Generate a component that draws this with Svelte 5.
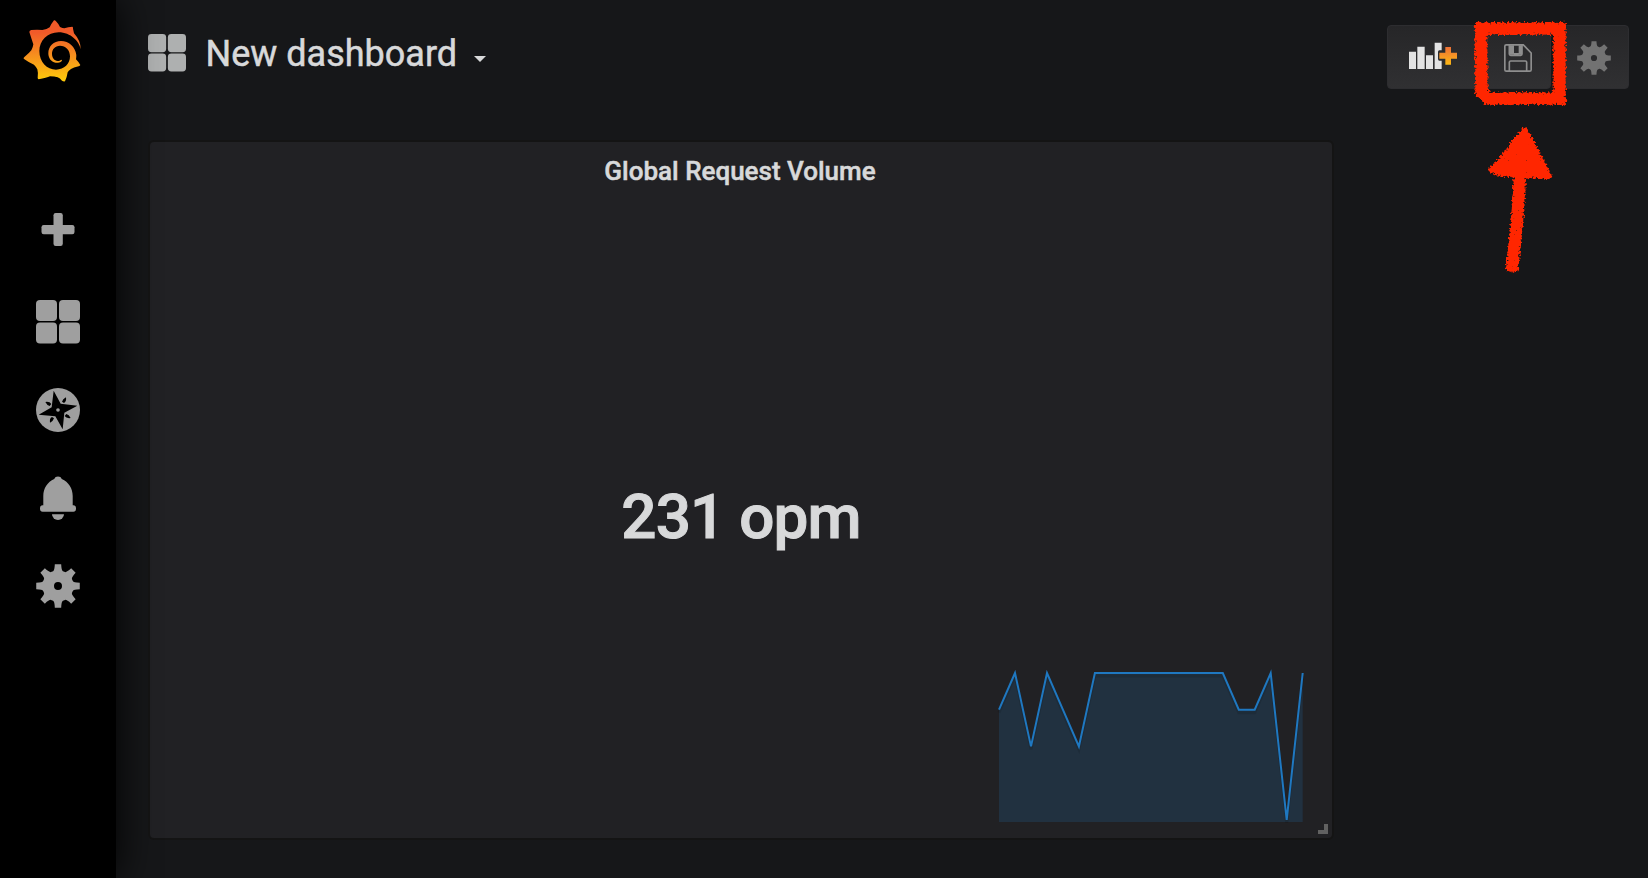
<script>
  function gear(outer, inner) {
    const pts = [];
    for (let i = 0; i < 8; i++) {
      const a = (i * Math.PI) / 4;
      const at = (r, d) =>
        (r * Math.sin(a + d)).toFixed(2) + ' ' + (-r * Math.cos(a + d)).toFixed(2);
      pts.push((i ? 'L' : 'M') + at(inner, -0.32));
      pts.push('Q' + at(inner + 0.2, -0.22) + ' ' + at(outer, -0.145));
      pts.push('L' + at(outer, 0.145));
      pts.push('Q' + at(inner + 0.2, 0.22) + ' ' + at(inner, 0.32));
    }
    return pts.join('') + 'Z';
  }
  const gearPath = gear(22, 15.6) + 'M4 0A4 4 0 1 0 -4 0A4 4 0 1 0 4 0Z';

  const values = [3, 4, 2, 4, 3, 2, 4, 4, 4, 4, 4, 4, 4, 4, 3, 3, 4, 0, 4];
  const step = 303.7 / 19;
  const xs = [0, 1, 2, 3, 4, 5, 6, 7, 8, 9, 10, 11, 12, 14, 15, 16, 17, 18, 19];
  const line = xs
    .map((x, i) => `${(x * step + 3).toFixed(1)},${(4 + (4 - values[i]) * 36.7).toFixed(1)}`)
    .join(' ');
  const area = `3,153 ${line} 306.7,153`;
</script>

{#snippet tiles(size)}
  <svg width={size} height={size} viewBox="0 0 44 44" fill="currentColor">
    <rect width="21" height="21" rx="4" /><rect x="23" width="21" height="21" rx="4" />
    <rect y="22.500" width="21" height="21" rx="4" /><rect x="23" y="22.500" width="21" height="21" rx="4" />
  </svg>
{/snippet}

<div class="app">
  <nav class="sidebar">
    <a class="logo" href="#home" aria-label="Home">
      <svg width="58" height="62" viewBox="69 61 174 186">
        <defs>
          <linearGradient id="flame" x1="0" y1="0" x2="0" y2="1">
            <stop offset=".2" stop-color="#f15a29" />
            <stop offset=".55" stop-color="#f68c1f" />
            <stop offset="1" stop-color="#fecb0a" />
          </linearGradient>
        </defs>
        <path fill="url(#flame)" d="M242 150C239 126 212 98 176 98C142 98 118 124 118 154C118 187 141 210 168 210C193 210 210 192 210 170C210 151 197 138 180 138C165 138 156 149 156 162C156 174 163 183 173 184C178 184.500 182 180 185 180Q188 183 183 186C179 189 172 190 167 189C153 187 145 175 145 161C145 140 161 124 183 124C207 124 226 142 229 166Q229 174 228 179Q236 187 241 196Q240 199 236 200Q220 203 213 208Q205 214 203 218Q201 232 195 245Q190 246 186 243Q180 236 173 233Q163 230 150 230Q140 235 116 239Q113 238 113 234Q115 219 112 209Q109 202 102 195Q88 189 71 177Q70 174 74 171Q87 161 94 152Q99 143 100 134Q94 116 88 97Q88 92 94 91Q112 89 127 91Q141 89 149 83Q154 72 162 62Q165 61 168 65Q176 73 180 82Q188 86 193 86Q205 82 217 81Q220 82 219 87L222 101Q243 124 242 150Z" />
      </svg>
    </a>
    <a class="item" href="#create" aria-label="Create">
      <svg width="44" height="44" viewBox="0 0 44 44" fill="currentColor">
        <rect x="17.500" y="5" width="9.300" height="33" rx="2.200" /><rect x="5.500" y="17" width="33" height="9.300" rx="2.200" />
      </svg>
    </a>
    <a class="item" href="#dashboards" aria-label="Dashboards">{@render tiles(44)}</a>
    <a class="item" href="#explore" aria-label="Explore">
      <svg width="44" height="44" viewBox="-66 -66 132 132">
        <circle r="66" fill="currentColor" />
        <g fill="#000">
          <path d="M-13-58L8-19L58-13L19 8L14 58L-8 19L-58 14L-19-8Z" />
          <path d="M24-38Q26-25 18-21L12-25Q14-33 24-38ZM38 24Q25 26 20 18L25 12Q33 14 38 24ZM-24 38Q-26 25-18 21L-12 25Q-14 33-24 38ZM-38-24Q-25-26-20-18L-25-12Q-33-14-38-24Z" />
        </g>
        <circle r="5.500" fill="currentColor" />
      </svg>
    </a>
    <a class="item" href="#alerting" aria-label="Alerting">
      <svg width="44" height="44" viewBox="0 0 44 44" fill="currentColor">
        <path d="M18.200 3A4 3.600 0 0 1 25.800 3C32.500 6 36.700 12.500 36.700 20V29.200H37.300A2.700 3.300 0 0 1 37.300 35.800H6.700A2.700 3.300 0 0 1 6.700 29.200H7.300V20C7.300 12.500 11.500 6 18.200 3Z" />
        <path d="M16 38.300H28A6 5.700 0 0 1 16 38.300Z" />
      </svg>
    </a>
    <a class="item" href="#configuration" aria-label="Configuration">
      <svg width="44" height="44" viewBox="-22 -22 44 44" fill="currentColor"><path d={gearPath} fill-rule="evenodd" /></svg>
    </a>
  </nav>

  <main>
    <header>
      <div class="title">
        <span class="title-icon">{@render tiles(38)}</span>
        <span class="name">New dashboard</span>
        <span class="caret"></span>
      </div>
      <div class="tools">
        <button class="add" aria-label="Add panel">
          <svg width="50" height="30" viewBox="0 0 150 90">
            <defs>
              <linearGradient id="plus" x1="0" y1="0" x2="0" y2="1">
                <stop offset="0" stop-color="#ee7037" /><stop offset="1" stop-color="#fdb813" />
              </linearGradient>
            </defs>
            <path fill="#e3e3e3" d="M3 35H24V87H3ZM28 20H50V87H28ZM54 46H75V87H54ZM80 8H101V31H94Q90 31 90 36V57Q90 62 94 62H101V87H80Z" />
            <path fill="url(#plus)" d="M112 21H129V38H147V56H129V74H112V56H94V38H112Z" />
          </svg>
        </button>
        <button class="save" aria-label="Save dashboard">
          <svg width="28" height="28" viewBox="0 0 84 84" fill="none" stroke="#8e8e8e" stroke-width="5">
            <path d="M7 2.500H58L81.500 27V77Q81.500 81.500 77 81.500H7Q2.500 81.500 2.500 77V7Q2.500 2.500 7 2.500Z" />
            <path d="M16 3V30Q16 34 20 34H50Q54 34 54 30V3M16 81V55Q16 51 20 51H64Q68 51 68 55V81" />
            <path d="M17 4H30V32H17ZM44 4H54V32H44ZM30 27H44V34H30Z" fill="#8e8e8e" stroke="none" />
          </svg>
        </button>
        <button class="settings" aria-label="Settings">
          <svg width="34" height="34" viewBox="-22 -22 44 44" fill="#727272"><path d={gearPath} fill-rule="evenodd" /></svg>
        </button>
      </div>
    </header>

    <section class="panel">
      <h2>Global Request Volume</h2>
      <div class="value">231 opm</div>
      <svg class="spark" width="310" height="157" viewBox="0 0 310 157">
        <polygon points={area} fill="#1f78c1" fill-opacity=".18" />
        <polyline points={line} transform="translate(0 3)" fill="none" stroke="#000" stroke-opacity=".1" stroke-width="3" />
        <polyline points={line} fill="none" stroke="#1f78c1" stroke-width="2" />
      </svg>
      <span class="resize"></span>
    </section>
  </main>

  <svg class="annotation" width="120" height="270" viewBox="1465 15 120 270">
    <defs>
      <filter id="chalk" filterUnits="userSpaceOnUse" x="1465" y="15" width="120" height="270" color-interpolation-filters="sRGB">
        <feTurbulence type="fractalNoise" baseFrequency=".5" numOctaves="3" seed="7" result="noise" />
        <feGaussianBlur in="SourceGraphic" stdDeviation="1.600" result="soft" />
        <feComposite in="soft" in2="noise" operator="arithmetic" k1="0" k2="1" k3="1.600" k4="-.78" result="mix" />
        <feComponentTransfer in="mix" result="mask">
          <feFuncA type="linear" slope="4" intercept="-1.400" />
        </feComponentTransfer>
        <feGaussianBlur in="SourceAlpha" stdDeviation="1" result="bounds" />
        <feComponentTransfer in="bounds" result="reach">
          <feFuncA type="linear" slope="8" intercept="-.4" />
        </feComponentTransfer>
        <feFlood flood-color="#ff2600" />
        <feComposite in2="mask" operator="in" />
        <feComposite in2="reach" operator="in" />
      </filter>
    </defs>
    <g filter="url(#chalk)" fill="#ff2600" stroke="#ff2600">
      <path d="M1481 28.500L1559.500 28.500V98.500L1488 98.500L1481.500 92Z" fill="none" stroke-width="12" />
      <path d="M1475 22H1481V28H1475ZM1560 22H1566V28H1560ZM1560 99H1566V105H1560Z" stroke="none" />
      <path d="M1525 129L1550 177L1524 175.500L1499 174L1490.500 170Q1508 153 1514 141Z" stroke-width="4" stroke-linejoin="round" />
      <path d="M1520 174Q1518.500 216 1511.500 271.500" fill="none" stroke-width="12" />
    </g>
  </svg>
</div>

<style>
  :global(body) { margin: 0; background: #161719; }
  .app {
    position: relative;
    display: flex;
    width: 1648px;
    height: 878px;
    overflow: hidden;
    background: #161719;
    color: #d8d9da;
    font-family: Roboto, sans-serif;
  }
  svg { display: block; }
  .sidebar {
    flex: none;
    display: flex;
    flex-direction: column;
    width: 116px;
    background: #000;
    box-shadow: 0 0 40px #000;
    z-index: 1;
  }
  .logo { flex: none; height: 166px; padding: 20px 0 0 23px; margin-bottom: 22px; }
  .item {
    display: flex;
    flex: none;
    justify-content: center;
    height: 44px;
    margin-bottom: 44px;
    color: #9f9f9f;
  }
  .item:nth-child(2) { margin-bottom: 48px; }
  main { flex: 1; display: flex; flex-direction: column; padding: 0 19px 0 34px; }
  header { display: flex; justify-content: space-between; height: 142px; }
  .title { display: flex; align-items: flex-start; padding-top: 34px; margin-left: -2px; }
  .title-icon { color: #aeb0b0; }
  .name {
    margin: 1px 0 0 19.5px;
    font-size: 36px;
    line-height: 38px;
    -webkit-text-stroke: .5px #d8d9da;
  }
  .caret {
    margin: 22px 0 0 17px;
    border: 6px solid transparent;
    border-top-color: #d8d9da;
    border-bottom: 0;
  }
  .tools { display: flex; gap: 4px; height: 64px; margin-top: 25px; }
  button {
    display: flex;
    align-items: center;
    padding: 0;
    justify-content: center;
    border: 1px solid #2d2d30;
    background: linear-gradient(#262628, #303032);
    border-radius: 4px;
    box-sizing: border-box;
  }
  .add { width: 92px; padding-bottom: 4px; }
  .save { width: 68px; padding: 2px 0 0 2px; }
  .settings { width: 74px; padding: 2px 0 0 3px; }
  .panel {
    position: relative;
    width: 1182px;
    height: 696px;
    border-radius: 4px;
    background: #212124;
    box-shadow: 0 0 0 2px #141414;
    display: flex;
    flex-direction: column;
    align-items: center;
  }
  h2 {
    margin: 14px 2px 0 0;
    font-size: 26px;
    line-height: 30px;
    font-weight: 500;
    -webkit-text-stroke: .5px #d8d9da;
  }
  .value {
    margin-top: 294px;
    font-size: 62px;
    line-height: 74px;
    font-weight: 500;
    letter-spacing: -.8px;
    -webkit-text-stroke: 1px #d8d9da;
  }
  .spark { align-self: flex-end; margin: 115px 26px 0 0; }
  .resize {
    position: absolute;
    right: 4px;
    bottom: 4px;
    width: 6px;
    height: 6px;
    border: solid #616161;
    border-width: 0 4px 4px 0;
  }
  .annotation { position: absolute; left: 1465px; top: 15px; z-index: 2; }
</style>
